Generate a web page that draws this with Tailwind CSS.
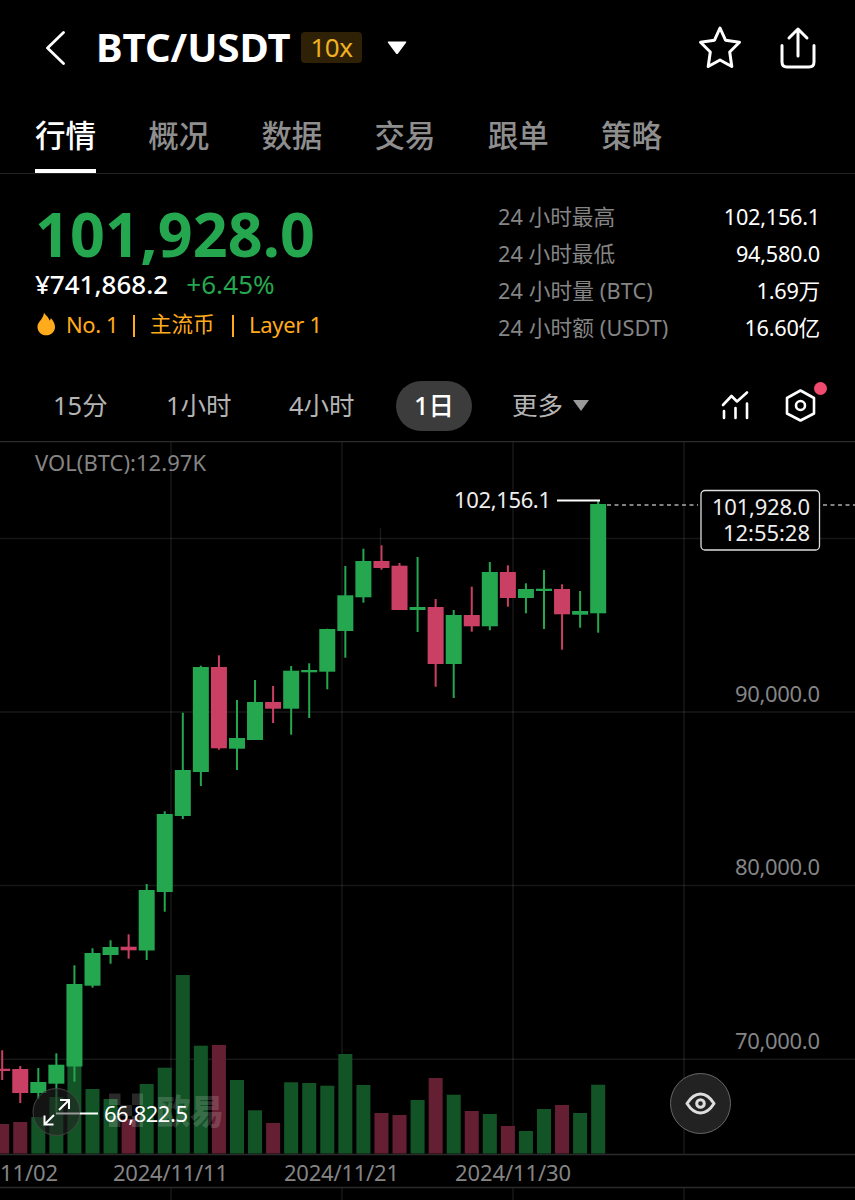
<!DOCTYPE html>
<html lang="zh-CN">
	<head>
		<meta charset="UTF-8" />
		<meta name="viewport" content="width=device-width, initial-scale=1.0" />
		<title>BTC/USDT</title>
		<script src="https://cdn.jsdelivr.net/npm/@tailwindcss/browser@4"></script>
	</head>
	<body class="bg-black text-white w-[855px] h-[1200px] overflow-hidden font-['Noto_Sans','Noto_Sans_CJK_SC',sans-serif]">
		<!-- Title bar -->
		<header class="flex items-center h-[95px] pl-[45px] pr-[38px]">
			<svg class="w-5 h-[34px] shrink-0" viewBox="0 0 20 34" fill="none" stroke="#fff" stroke-width="2.800" stroke-linecap="round" stroke-linejoin="round">
				<path d="M18.5 1.5 2.5 17l16 15.500" />
			</svg>
			<h1 class="ml-[31px] w-[198px] pb-[2px] text-[40px] leading-[48px] font-bold whitespace-nowrap">BTC/USDT</h1>
			<span class="ml-[7px] flex items-center justify-center w-[61px] h-[31px] pb-[2px] rounded bg-[#2f2105] text-[#f0b020] text-[26px] leading-none tracking-[-0.5px]">10x</span>
			<svg class="ml-[25px] w-5 h-[14px]" viewBox="0 0 20 14" fill="#fff"><path d="M1.500 0.500h17q1.500 0 .5 1.300l-8 10.700q-1 1.200-2 0l-8-10.700q-1-1.300.5-1.300z" /></svg>
			<div class="ml-auto pb-[2px] flex items-center gap-[37px]">
				<svg class="w-11 h-11" viewBox="0 0 44 44" fill="none" stroke="#fff" stroke-width="3" stroke-linejoin="round">
					<path d="M22 3 27.500 15.200 41.500 17.300 31.700 27 33.800 41.500 22 35 10.200 41.500 12.300 27 2.500 17.300 16.500 15.200z" />
				</svg>
				<svg class="w-[38px] h-11" viewBox="0 0 38 44" fill="none" stroke="#fff" stroke-width="3" stroke-linecap="round" stroke-linejoin="round">
					<path d="M3 20.500V37q0 5 5 5h22q5 0 5-5V20.500M19 31V4M10 13l9-9 9 9" />
				</svg>
			</div>
		</header>

		<!-- Tabs -->
		<nav class="h-[79px] border-b border-[#222] px-[35px] flex gap-[52.200px] text-[30.500px] leading-[44px] font-medium text-[#8e8e8e]">
			<a class="text-white h-[78px] pt-[18px] border-b-4 border-white">行情</a>
			<a class="pt-[18px]">概况</a>
			<a class="pt-[18px]">数据</a>
			<a class="pt-[18px]">交易</a>
			<a class="pt-[18px]">跟单</a>
			<a class="pt-[18px]">策略</a>
		</nav>

		<!-- Price summary -->
		<section class="h-[196px] flex justify-between pl-[35px] pr-[35px]">
			<div class="pt-[27px]">
				<p class="text-[61px] leading-[66px] font-bold tracking-[0.150px] text-[#25a750]">101,928.0</p>
				<p class="flex gap-[18px] text-[26px] leading-[34px]">
					<span class="font-medium">¥741,868.2</span>
					<span class="text-[#25a750] tracking-[0.100px]">+6.45%</span>
				</p>
				<p class="mt-[7px] flex items-center text-[22px] leading-[32px] text-[#ffab1c] whitespace-nowrap">
					<svg class="w-[22px] h-6" viewBox="0 0 22 24" fill="#ffab1c">
						<path d="M9 .5c1 2.500 4.500 4 5.500 8 .800-.5 1.200-1.500 1.200-2.500 2.500 2.500 4.300 5.500 4.300 9 0 4.700-4 8.300-8.800 8.300S2.500 19.700 2.500 15c0-4 2.300-5.300 4-8C7.800 5 8.800 3 9 .5z" />
					</svg>
					<span class="ml-[9px] w-[51px] tracking-[-0.400px]">No. 1</span>
					<span class="ml-[16px] mt-[3px] w-[2px] h-[22px] bg-[#ffab1c]"></span>
					<span class="ml-[15px] w-[65px] text-[21.500px]">主流币</span>
					<span class="ml-[17px] mt-[3px] w-[2px] h-[22px] bg-[#ffab1c]"></span>
					<span class="ml-[15px] tracking-[-0.300px]">Layer 1</span>
				</p>
			</div>
			<dl class="w-[322px] pt-[24px] text-[21.700px] leading-[37px]">
				<div class="flex justify-between"><dt class="text-[#858585]">24 小时最高</dt><dd class="tracking-[-0.250px]">102,156.1</dd></div>
				<div class="flex justify-between"><dt class="text-[#858585]">24 小时最低</dt><dd class="tracking-[-0.250px]">94,580.0</dd></div>
				<div class="flex justify-between"><dt class="text-[#858585] tracking-[0.100px]">24 小时量 (BTC)</dt><dd class="tracking-[-0.250px]">1.69万</dd></div>
				<div class="flex justify-between"><dt class="text-[#858585] tracking-[0.100px]">24 小时额 (USDT)</dt><dd class="tracking-[-0.250px]">16.60亿</dd></div>
			</dl>
		</section>

		<!-- Time frames -->
		<section class="h-[71px] flex items-center pl-[53px] pr-[36px] text-[25.500px] leading-none text-[#b4b4b4] whitespace-nowrap">
			<span class="w-[113px]">15分</span>
			<span class="w-[123px]">1小时</span>
			<span class="w-[107px]">4小时</span>
			<span class="w-[76px] h-[50px] rounded-full bg-[#3c3c3c] text-white font-medium flex items-center justify-center">1日</span>
			<span class="ml-[40px]">更多</span>
			<svg class="ml-[10px] w-4 h-[11px]" viewBox="0 0 16 11" fill="#999"><path d="M0 0h16L8 11z" /></svg>
			<div class="ml-auto pb-[2px] flex items-center gap-[33px]">
				<svg class="w-[30px] h-[30px]" viewBox="0 0 30 30" fill="none" stroke="#fff" stroke-width="2.600" stroke-linecap="round" stroke-linejoin="round">
					<path d="M3 15 11.500 6l5.500 5.500L27 2.500M4 21v7M15.500 18v10M27 13.500V28" />
				</svg>
				<span class="relative">
					<svg class="w-9 h-9" viewBox="0 0 36 36" fill="none" stroke="#fff" stroke-width="2.600" stroke-linejoin="round">
						<path d="M17.500 3.500 31 11v15.500L17.500 33.500 4 26.500V11z" />
						<circle cx="17.500" cy="18.500" r="4.500" />
					</svg>
					<i class="absolute left-[31px] -top-[5px] w-[13px] h-[13px] rounded-full bg-[#ee4b6e]"></i>
				</span>
			</div>
		</section>

		<!-- Chart -->
		<svg class="block w-[855px] h-[759px]" viewBox="0 441 855 759" font-size="22">
			<g id="grid" stroke="#fff" stroke-opacity=".09" stroke-width="1.500"></g>
			<g stroke="#2b2b2b" stroke-width="1.300">
				<path d="M0 441.600H855M0 1154.500H855M0 1187.500H855" />
			</g>
			<g id="volume"></g>
			<g id="candles"></g>

			<!-- Watermark -->
			<g fill="#fff" fill-opacity=".16">
				<path d="M109 1093.500h11.500v11.500h-11.500zM132 1093.500h11v11.500h-11zM120.500 1105h11.500v11h-11.500zM109 1116h11.500v11h-11.500zM132 1116h11v11h-11z" />
				<text x="156" y="1123.500" font-size="34.500" font-weight="900" textLength="68">欧易</text>
			</g>

			<text x="35" y="471" fill="#858585" textLength="171">VOL(BTC):12.97K</text>

			<!-- High and low marks -->
			<text x="454" y="508" fill="#eee" textLength="97">102,156.1</text>
			<path d="M557 500.500H600" stroke="#fff" stroke-width="2" />
			<circle cx="56.500" cy="1112" r="23.500" fill="#222" fill-opacity=".6" stroke="#444" />
			<path d="M56 1113.500H80" stroke="#999" stroke-width="2" />
			<path d="M80 1113.500H98" stroke="#fff" stroke-width="2" />
			<text x="104" y="1122" fill="#fff" textLength="84">66,822.5</text>
			<path d="M59 1110 69 1100M60 1100h9v9M54 1115 44.500 1124.500M44.500 1115.500v9h9" fill="none" stroke="#fff" stroke-width="2" />

			<!-- Last price -->
			<path d="M607 505H698M823 505H855" stroke="#aaa" stroke-width="1.500" stroke-dasharray="4 3.500" />
			<rect x="701" y="490.500" width="118.500" height="59.500" rx="4" fill="#000" stroke="#ddd" stroke-width="1.300" />
			<g fill="#eee">
				<text x="712" y="514.500" textLength="98">101,928.0</text>
				<text x="723" y="540.500" textLength="87">12:55:28</text>
			</g>

			<!-- Axis labels -->
			<g fill="#858585">
				<text x="735" y="702" textLength="85">90,000.0</text>
				<text x="735" y="875" textLength="85">80,000.0</text>
				<text x="735" y="1049" textLength="85">70,000.0</text>
				<text x="0" y="1180.500" textLength="58">11/02</text>
				<text x="113" y="1180.500" textLength="115">2024/11/11</text>
				<text x="284" y="1180.500" textLength="115">2024/11/21</text>
				<text x="455" y="1180.500" textLength="116">2024/11/30</text>
			</g>

			<!-- Eye button -->
			<circle cx="700.500" cy="1103.500" r="30" fill="#222" stroke="#666" />
			<g fill="none" stroke="#ddd" stroke-width="3">
				<path d="M687 1103.500Q693 1094 700.500 1094T714 1103.500Q708 1113 700.500 1113T687 1103.500z" stroke-linejoin="round" />
				<circle cx="700.500" cy="1103.500" r="3.800" />
			</g>
		</svg>

		<script>
			const UP = "#25a750";
			const DOWN = "#ca3f64";
			// up, high, body top, body bottom, low, volume top
			const data = [
				[0, 1050.3, 1068.7, 1071, 1080, 1124],
				[0, 1066, 1069, 1093, 1103, 1122],
				[1, 1068, 1082, 1093, 1099, 1117],
				[1, 1053.3, 1064.7, 1083.7, 1114, 1097],
				[1, 965.3, 984, 1066.5, 1081.7, 1062],
				[1, 948.3, 953, 985.7, 987.7, 1089],
				[1, 940.3, 947, 955, 963.7, 1099],
				[0, 934.3, 946.7, 950.3, 958.7, 1119],
				[1, 884, 890, 950.5, 960, 1084],
				[1, 811.3, 814, 892, 911.7, 1067.7],
				[1, 712.7, 770, 816, 819, 975],
				[1, 665.7, 667, 772, 786, 1045.7],
				[0, 655.3, 667, 748.3, 749.7, 1045],
				[1, 700, 738, 748.7, 770, 1080],
				[1, 680, 702, 740, 740, 1110.3],
				[0, 686, 702, 708.7, 723, 1123],
				[1, 666, 670.7, 708.7, 734.7, 1082.3],
				[1, 663.3, 670, 672.3, 718, 1083],
				[1, 628.7, 629, 671.7, 689.3, 1085.7],
				[1, 566, 595.3, 631, 657.7, 1054],
				[1, 548.7, 561, 597.3, 602.7, 1085],
				[0, 545.3, 561, 568, 569.7, 1113],
				[0, 563, 565.7, 610, 610, 1115],
				[1, 557, 607, 610, 632, 1100],
				[0, 599, 607, 664, 686.7, 1078],
				[1, 610, 615, 664, 698, 1094.7],
				[0, 586.7, 615, 626.3, 631.7, 1111],
				[1, 562, 572, 626.3, 630.3, 1114],
				[0, 565.3, 572, 598, 606.7, 1126],
				[1, 583.3, 589, 598, 613.3, 1131],
				[1, 570, 588.7, 591, 629, 1109],
				[0, 584.3, 589, 614.3, 649.7, 1105],
				[1, 591, 611, 614.7, 627.7, 1113],
				[1, 500, 504, 613.3, 632.7, 1084.7],
			];

			const rect = (x, y, w, h, fill) =>
				`<rect x="${x}" y="${y}" width="${w}" height="${h}" fill="${fill}"/>`;

			let volume = "";
			let candles = "";
			data.forEach(([up, high, top, bottom, low, vol], i) => {
				const x = 2.2 + i * 18.06;
				const color = up ? UP : DOWN;
				volume += rect(x - 7, vol, 14, 1153.5 - vol, up ? "#135427" : "#651f33");
				candles += rect(x - 1, high, 2, low - high, color);
				candles += rect(x - 8, top, 16, bottom - top, color);
			});
			document.getElementById("volume").innerHTML = volume;
			document.getElementById("candles").innerHTML = candles;

			let grid = "";
			[171, 342, 513, 684].forEach((x) => {
				grid += `<path d="M${x} 442V1154M${x} 1188V1200"/>`;
			});
			[538.5, 712, 885.5, 1059.2].forEach((y) => {
				grid += `<path d="M0 ${y}H855"/>`;
			});
			grid += `<path d="M380.500 528V545"/>`;
			document.getElementById("grid").innerHTML = grid;
		</script>
	</body>
</html>
